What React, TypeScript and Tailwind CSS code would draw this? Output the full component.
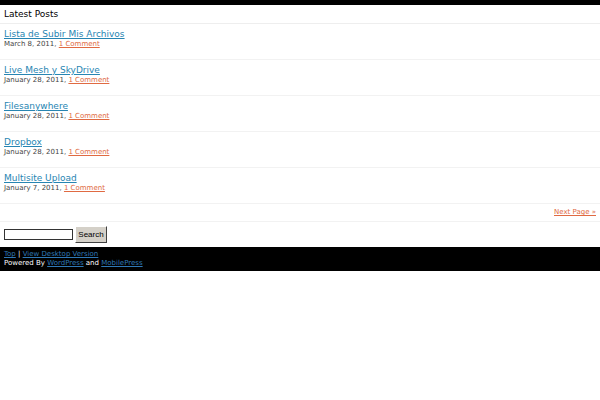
const POSTS = [
  { title: "Lista de Subir Mis Archivos", date: "March 8, 2011" },
  { title: "Live Mesh y SkyDrive", date: "January 28, 2011" },
  { title: "Filesanywhere", date: "January 28, 2011" },
  { title: "Dropbox", date: "January 28, 2011" },
  { title: "Multisite Upload", date: "January 7, 2011" },
];

export default function App() {
  return (
    <div className="w-[600px] h-[400px] bg-white font-['DejaVu_Sans',sans-serif] text-[#333]">
      <div className="h-[5px] bg-black" />
      <div className="h-[19px] px-1 pt-[2px] flex items-center border-b border-[#eee] text-[9px] text-black">
        Latest Posts
      </div>

      {POSTS.map((p) => (
        <div key={p.title} className="h-[36px] px-1 pt-[4px] border-b border-[#f2f2f2]">
          <a href="#" className="block text-[9px] leading-[12px] text-[#2785b2] underline">
            {p.title}
          </a>
          <div className="text-[7px] leading-[9px] text-[#444]">
            {p.date}, <a href="#" className="text-[#e06a42] underline">1 Comment</a>
          </div>
        </div>
      ))}

      <div className="h-[18px] px-1 flex items-center justify-end border-b border-[#f2f2f2]">
        <a href="#" className="text-[7px] text-[#e06a42] underline">Next Page »</a>
      </div>

      <div className="h-[25px] px-1 flex items-center gap-[2px]">
        <input type="text" className="w-[69px] h-[11px] border border-[#333] bg-white" />
        <button className="h-[17px] w-[32px] text-[8px] font-['Liberation_Sans',sans-serif] text-black bg-[#d4d0c8] border border-t-white border-l-white border-r-[#404040] border-b-[#404040]">
          Search
        </button>
      </div>

      <div className="h-[24px] bg-black px-1 pt-[3px] text-[7px] leading-[9px] text-white">
        <div>
          <a href="#" className="text-[#2f78b6] underline">Top</a> |{" "}
          <a href="#" className="text-[#2f78b6] underline">View Desktop Version</a>
        </div>
        <div>
          Powered By <a href="#" className="text-[#2f78b6] underline">WordPress</a> and{" "}
          <a href="#" className="text-[#2f78b6] underline">MobilePress</a>
        </div>
      </div>
    </div>
  );
}
